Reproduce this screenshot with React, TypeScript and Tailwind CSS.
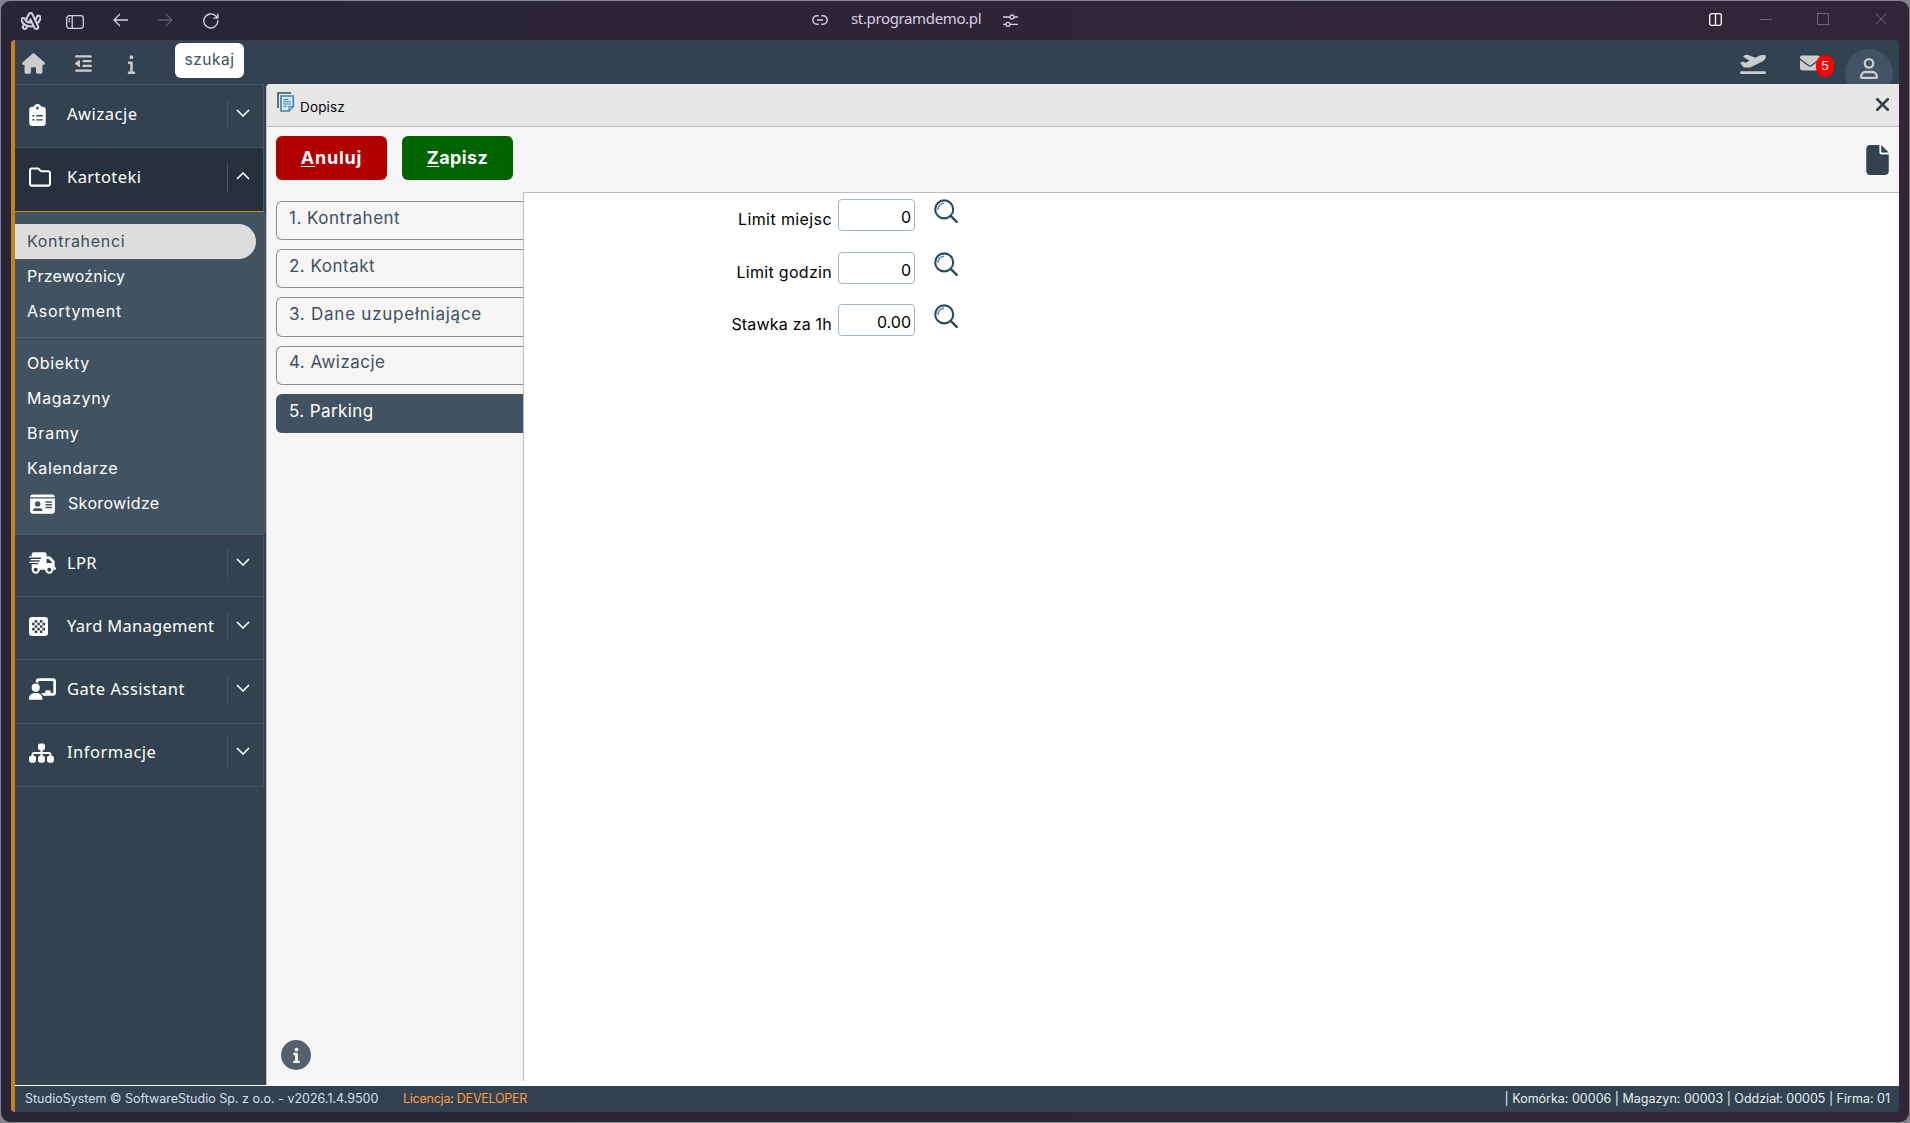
import type { ReactNode } from 'react';
import clsx from 'clsx';
import {
  FaChalkboardUser,
  FaClipboardList,
  FaEnvelope,
  FaFile,
  FaHouse,
  FaIdCard,
  FaInfo,
  FaOutdent,
  FaPlaneDeparture,
  FaRegFolder,
  FaSitemap,
  FaTruckFast,
  FaXmark,
} from 'react-icons/fa6';
import { SiArc } from 'react-icons/si';

function BrowserBar() {
  return (
    <div className="flex h-[39px] shrink-0 items-center text-[#d5cfe3]">
      <SiArc className="ml-2.5 h-5 w-5 fill-none stroke-current stroke-[1.4]" />
      <svg className="mt-0.5 ml-[25px] h-[14px] w-[18px] fill-none stroke-current" viewBox="0 0 18 14" strokeWidth="1.3">
        <rect x="0.7" y="0.7" width="16.6" height="12.6" rx="2.5" />
        <path d="M6.2 1v12M2.5 4h1.6M2.5 6.5h1.6" />
      </svg>
      <svg className="mb-px ml-[29px] h-[14px] w-[15px] fill-none stroke-current" viewBox="0 0 15 14" strokeWidth="1.3">
        <path d="M15 7H1M7 1L1 7l6 6" />
      </svg>
      <svg className="mb-px ml-[30px] h-[14px] w-[15px] fill-none stroke-[#625d70]" viewBox="0 0 15 14" strokeWidth="1.3">
        <path d="M0 7h14M8 1l6 6-6 6" />
      </svg>
      <svg className="ml-[30px] h-4 w-4 fill-none stroke-current" viewBox="0 0 16 16" strokeWidth="1.4">
        <path d="M14.8 7.5A7 7 0 1 1 12.8 3L14.5 4.8M14.8 0.5v4.6h-4.6" />
      </svg>
      <svg className="mb-px ml-[593px] h-[10px] w-[16px] fill-none stroke-current" viewBox="0 0 16 10" strokeWidth="1.4">
        <path d="M6.7 0.8H5a4.2 4.2 0 0 0 0 8.4h1.7M9.3 0.8H11a4.2 4.2 0 0 1 0 8.4H9.3M5 5h6" />
      </svg>
      <span className="ml-[23px] w-[130px] pb-1 font-['Noto_Sans'] text-[15px] tracking-[-0.36px] whitespace-nowrap">
        st.programdemo.pl
      </span>
      <svg className="mb-px ml-[22px] h-[13px] w-[15px] fill-none stroke-current" viewBox="0 0 15 13" strokeWidth="1.3">
        <path d="M0 3h7M11 3h4M0 10.3h3M7 10.3h8" />
        <circle cx="9" cy="3" r="2" />
        <circle cx="5" cy="10.3" r="2" />
      </svg>
      <div className="ml-auto flex items-center pr-3 pb-[3px] text-[#6f6478]">
        <svg className="mt-px h-[13px] w-[13px] fill-none stroke-white" viewBox="0 0 13 13" strokeWidth="1.3">
          <rect x="0.7" y="0.7" width="11.6" height="11.6" rx="1.8" />
          <path d="M6.5 1v11" />
        </svg>
        <div className="ml-[38px] h-px w-3 bg-current" />
        <div className="ml-[45px] h-3 w-3 border border-current" />
        <svg className="ml-[46px] h-3 w-3 fill-none stroke-current" viewBox="0 0 12 12">
          <path d="M0.5 0.5l11 11M11.5 0.5l-11 11" />
        </svg>
      </div>
    </div>
  );
}

function TopBar() {
  return (
    <header className="flex h-11 shrink-0 items-start overflow-hidden text-[#cccccc]">
      <FaHouse className="mt-[13px] ml-[7px] h-[21px] w-[23px]" />
      <FaOutdent className="mt-[14px] ml-[29px] h-[19px] w-[19px]" />
      <FaInfo className="mt-[14px] ml-[34px] h-5 w-[9px]" />
      <button className="mt-[3px] ml-[39px] h-[35px] w-[69px] rounded-md bg-white pb-0.5 text-[15.5px] tracking-[0.55px] text-[#405060]">
        szukaj
      </button>
      <div className="ml-auto flex items-start">
        <FaPlaneDeparture className="mt-[13px] h-[21px] w-[26px]" />
        <div className="relative mt-[16px] ml-[34px] h-[15px] w-[20px]">
          <FaEnvelope className="-mt-[3px] h-5 w-5" />
          <span className="absolute -top-[1px] left-4 flex h-[22px] w-[18px] items-center justify-center rounded-full bg-[#ff0000] font-['Liberation_Sans'] text-[13px] text-white">
            5
          </span>
        </div>
        <div className="mt-[9px] mr-1.5 ml-[25px] flex h-12 w-12 shrink-0 justify-center rounded-full bg-[#415364]">
          <svg className="mt-[9px] h-[21px] w-[18px] fill-none stroke-current" viewBox="0 0 18 21" strokeWidth="2.3">
            <circle cx="9" cy="5.4" r="4.2" />
            <path d="M1.2 19.8v-1.6c0-2.3 2-4.2 4.4-4.2h6.8c2.4 0 4.4 1.9 4.4 4.2v1.6z" strokeLinejoin="round" />
          </svg>
        </div>
      </div>
    </header>
  );
}

function BoardIcon() {
  return (
    <svg className="h-[19px] w-[19px]" viewBox="0 0 19 19">
      <rect width="19" height="19" rx="3" fill="#fff" />
      {[0, 1, 2, 3, 4].map((row) =>
        [0, 1, 2, 3, 4]
          .filter((col) => (row + col) % 2 === 1)
          .map((col) => (
            <rect key={`${row}-${col}`} x={3.1 + col * 2.6} y={3.1 + row * 2.6} width="2.5" height="2.5" fill="#33424f" />
          )),
      )}
    </svg>
  );
}

type MenuRowProps = {
  icon: ReactNode;
  label: string;
  open?: boolean;
  className?: string;
};

function MenuRow({ icon, label, open, className }: MenuRowProps) {
  return (
    <div
      className={clsx(
        'mr-0.5 flex items-center border-t border-r border-[#455766] pl-3.5 text-white',
        open ? 'border-b border-b-[#c98a28] bg-[#27313d]' : 'bg-[#334250]',
        className,
      )}
    >
      <div className="w-[38px]">{icon}</div>
      <span className="font-['Noto_Sans'] text-[16.5px] whitespace-nowrap">{label}</span>
      <div className="mr-[13px] ml-auto flex h-[29px] items-center border-l border-[#455766] pb-[3px] pl-2">
        <svg className={clsx('h-2 w-[14px] fill-none stroke-white', open && 'rotate-180')} viewBox="0 0 14 8" strokeWidth="1.6">
          <path d="M1 1l6 6 6-6" />
        </svg>
      </div>
    </div>
  );
}

function SubItem({ children, className = 'tracking-[0.6px]' }: { children: ReactNode; className?: string }) {
  return <div className={clsx('flex h-[35px] items-center pb-px pl-3 text-[16px] text-white', className)}>{children}</div>;
}

function Sidebar() {
  return (
    <nav className="w-[251px] shrink-0 bg-[#334250]">
      <MenuRow
        className="h-[63px] pb-[3px] tracking-[0.55px]"
        icon={<FaClipboardList className="h-[22px] w-[17px]" />}
        label="Awizacje"
      />
      <MenuRow
        open
        className="h-[65px] pb-[5px] tracking-[0.42px]"
        icon={<FaRegFolder className="h-[22px] w-[22px]" />}
        label="Kartoteki"
      />
      <div className="bg-[#415260] pt-3">
        <div className="flex h-[35px] w-[241px] items-center rounded-r-full bg-[#dddddd] pb-px pl-3 text-[16px] tracking-[0.7px] text-[#3d4c5a]">
          Kontrahenci
        </div>
        <SubItem className="tracking-[0.2px]">Przewoźnicy</SubItem>
        <SubItem className="tracking-[0.7px]">Asortyment</SubItem>
        <hr className="mt-2 mb-2 border-[#526371]" />
        <SubItem>Obiekty</SubItem>
        <SubItem className="tracking-[0.7px]">Magazyny</SubItem>
        <SubItem className="tracking-[0.9px]">Bramy</SubItem>
        <SubItem>Kalendarze</SubItem>
        <SubItem className="tracking-[0.35px]">
          <FaIdCard className="mt-0.5 mr-[13px] ml-[3px] h-[22px] w-[25px] shrink-0" />
          Skorowidze
        </SubItem>
        <div className="h-[13px]" />
      </div>
      <MenuRow
        className="h-[62px] pb-[5px] tracking-[0.3px]"
        icon={<FaTruckFast className="h-[22px] w-[27px]" />}
        label="LPR"
      />
      <MenuRow className="h-[63px] pb-1 tracking-[0.3px]" icon={<BoardIcon />} label="Yard Management" />
      <MenuRow
        className="h-16 pb-[5px] tracking-[0.52px]"
        icon={<FaChalkboardUser className="h-[22px] w-[27px]" />}
        label="Gate Assistant"
      />
      <MenuRow
        className="h-16 border-b pb-[5px] tracking-[0.5px]"
        icon={<FaSitemap className="h-[22px] w-[25px]" />}
        label="Informacje"
      />
    </nav>
  );
}

function SearchIcon() {
  return (
    <svg className="ml-[19px] h-6 w-6 fill-none" viewBox="0 0 24 24" strokeLinecap="round">
      <circle cx="10.2" cy="10.4" r="9" stroke="#2b4a58" strokeWidth="2.1" />
      <path d="M16.9 17.1l5.8 5.7" stroke="#2b4a58" strokeWidth="2.4" />
      <path d="M4 10.3a6.4 6.4 0 0 1 5.6-6" stroke="#4a86bd" strokeWidth="1.6" />
    </svg>
  );
}

const tabs = [
  { label: '1. Kontrahent', className: 'tracking-[0.5px]' },
  { label: '2. Kontakt', className: 'tracking-[0.5px]' },
  { label: '3. Dane uzupełniające', className: 'tracking-[0.75px]' },
  { label: '4. Awizacje', className: 'tracking-[0.45px]' },
  { label: '5. Parking', className: 'tracking-[0.4px]' },
];

const fields = [
  { label: 'Limit miejsc', value: '0', className: 'tracking-[0.4px]' },
  { label: 'Limit godzin', value: '0', className: 'tracking-[0.3px]' },
  { label: 'Stawka za 1h', value: '0.00', className: 'tracking-[0.2px]' },
];

function FormPanel() {
  return (
    <main className="flex grow flex-col rounded-tl-[4px] border-l border-[#bdc1c4] bg-white">
      <div className="flex h-[43px] shrink-0 items-center rounded-tl-[4px] border-b border-[#bcbcbc] bg-[#e7e7e7]">
        <svg className="mb-[7px] ml-[10px] h-5 w-[18px] fill-none" viewBox="0 0 18 20">
          <path d="M1 16V1h13" stroke="#345461" strokeWidth="1.6" />
          <path d="M4 4h12.3v10.5L12 19H4z" stroke="#3f7fb5" strokeWidth="1.6" fill="#d9e8f5" />
          <path d="M12 19v-4.5h4.3M6.3 7.5h5M6.3 9.7h7.5M6.3 12h7.5M6.3 14.2h3.5" stroke="#3f7fb5" strokeWidth="1.1" />
        </svg>
        <span className="mt-[5px] ml-[5px] text-[13.5px] tracking-[0.15px] text-black">Dopisz</span>
        <FaXmark className="mr-[6px] mb-0.5 ml-auto h-[21px] w-[21px] text-[#334250]" />
      </div>
      <div className="flex h-[65px] shrink-0 bg-[#f5f5f5] pt-[9px] pl-[9px]">
        <button className="h-11 w-[111px] rounded-md bg-[#b10000] pb-0.5 text-[18px] font-bold tracking-[0.75px] text-white">
          <span className="underline underline-offset-2">A</span>nuluj
        </button>
        <button className="ml-[15px] h-11 w-[111px] rounded-md bg-[#006400] pb-0.5 text-[18px] font-bold tracking-[0.4px] text-white">
          <span className="underline underline-offset-2">Z</span>apisz
        </button>
        <FaFile className="mt-[9px] mr-[10px] ml-auto h-[30px] w-[23px] text-[#334250]" />
      </div>
      <div className="flex grow">
        <div className="mb-[4px] flex w-[256px] shrink-0 flex-col gap-[9px] bg-[#f5f5f5] pt-[9px] pl-[9px]">
          {tabs.map((tab, i) => (
            <div
              key={tab.label}
              className={clsx(
                'flex h-[39.2px] items-center rounded-l-md border border-r-0 pb-1 pl-3 text-[17px]',
                i === 4 ? '-mr-px border-[#415260] bg-[#415260] text-white' : 'border-[#8c8c8c] text-[#405060]',
                tab.className,
              )}
            >
              {tab.label}
            </div>
          ))}
          <div className="mt-auto mb-[11px] ml-[5px] flex h-[30px] w-[30px] items-center justify-center rounded-full bg-[#54606c]">
            <FaInfo className="h-4 w-[9px] stroke-white stroke-[24] text-white" />
          </div>
        </div>
        <div className="mb-[4px] grow border-t border-l border-[#bcbcbc] pt-[6px]">
          {fields.map((field) => (
            <div key={field.label} className="flex h-[52.5px] items-start">
              <label className={clsx('mt-2 w-[308px] text-right text-[16px] text-black', field.className)}>
                {field.label}
              </label>
              <input
                className="ml-[6px] h-8 w-[77px] rounded-[4px] border border-[#9fb6cc] pt-1 pr-[3px] text-right text-[16px] text-black"
                defaultValue={field.value}
              />
              <SearchIcon />
            </div>
          ))}
        </div>
      </div>
    </main>
  );
}

function Footer() {
  return (
    <footer className="flex h-[26px] shrink-0 items-center bg-[#334250] pr-[9px] pl-2.5 text-[12.5px] whitespace-nowrap text-[#d3deef]">
      <span className="w-[378px]">StudioSystem © SoftwareStudio Sp. z o.o. - v2026.1.4.9500</span>
      <span className="mt-px tracking-[-0.24px] text-[#ff9a3c]">
        Licencja<span className="text-[#d3deef]">:</span> DEVELOPER
      </span>
      <span className="ml-auto text-[#e8edf3]">| Komórka: 00006 | Magazyn: 00003 | Oddział: 00005 | Firma: 01</span>
    </footer>
  );
}

export default function App() {
  return (
    <div className="h-[1123px] w-[1910px] overflow-hidden bg-[#85838f] pt-px pr-px pl-px font-['Inter',sans-serif]">
      <div className="flex h-[1121px] flex-col rounded-[9px] bg-linear-to-r from-[#272536] to-[#332538] pr-2.5 pb-[10px] pl-2.5">
        <BrowserBar />
        <div className="flex min-h-0 grow flex-col overflow-hidden rounded-[4px] border-l-4 border-[#c9811f] bg-[#334250]">
          <TopBar />
          <div className="flex min-h-0 grow border-b border-white">
            <Sidebar />
            <FormPanel />
          </div>
          <Footer />
        </div>
      </div>
    </div>
  );
}
